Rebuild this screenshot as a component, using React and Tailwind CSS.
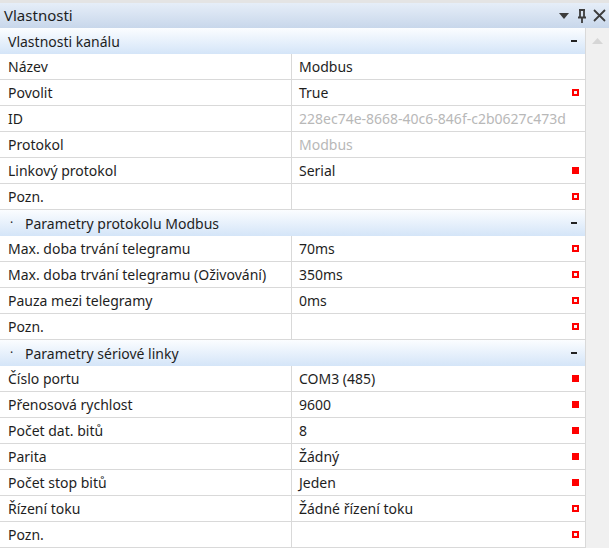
import React from 'react';

const GROUPS = [
  {
    title: 'Vlastnosti kanálu',
    bullet: false,
    rows: [
      { name: 'Název', value: 'Modbus' },
      { name: 'Povolit', value: 'True', mark: 'open' },
      { name: 'ID', value: '228ec74e-8668-40c6-846f-c2b0627c473d', disabled: true },
      { name: 'Protokol', value: 'Modbus', disabled: true },
      { name: 'Linkový protokol', value: 'Serial', mark: 'full' },
      { name: 'Pozn.', value: '', mark: 'open' },
    ],
  },
  {
    title: 'Parametry protokolu Modbus',
    bullet: true,
    rows: [
      { name: 'Max. doba trvání telegramu', value: '70ms', mark: 'open' },
      { name: 'Max. doba trvání telegramu (Oživování)', value: '350ms', mark: 'open' },
      { name: 'Pauza mezi telegramy', value: '0ms', mark: 'open' },
      { name: 'Pozn.', value: '', mark: 'open' },
    ],
  },
  {
    title: 'Parametry sériové linky',
    bullet: true,
    rows: [
      { name: 'Číslo portu', value: 'COM3 (485)', mark: 'full' },
      { name: 'Přenosová rychlost', value: '9600', mark: 'full' },
      { name: 'Počet dat. bitů', value: '8', mark: 'full' },
      { name: 'Parita', value: 'Žádný', mark: 'full' },
      { name: 'Počet stop bitů', value: 'Jeden', mark: 'full' },
      { name: 'Řízení toku', value: 'Žádné řízení toku', mark: 'open' },
      { name: 'Pozn.', value: '', mark: 'open' },
    ],
  },
];

function Mark({ type }) {
  if (type === 'full') return <div className="h-[7px] w-[7px] bg-[#ff0000]" />;
  if (type === 'open') return <div className="h-[7px] w-[7px] border-2 border-[#ff0000] bg-[#f4f4f4]" />;
  return null;
}

function GroupHeader({ title, bullet }) {
  return (
    <div className="flex h-[26px] items-center bg-gradient-to-b from-[#fbfdff] to-[#d4e5f8] pl-[8px] pr-[8px]">
      {bullet && <span className="w-[17px] pl-[2px] text-[12px]">·</span>}
      <span className="flex-1">{title}</span>
      <span className="mb-[1px] h-[2px] w-[6px] bg-[#222]" />
    </div>
  );
}

function Row({ row }) {
  return (
    <div className="flex h-[26px] border-b border-[#d9d9d9] bg-white">
      <div className="flex w-[292px] items-center border-r border-[#d9d9d9] pl-[8px]">{row.name}</div>
      <div className={`flex flex-1 items-center pl-[7px] pr-[6px] ${row.disabled ? 'text-[#b8b8b8]' : ''}`}>
        <span className="flex-1 whitespace-nowrap">{row.value}</span>
        <Mark type={row.mark} />
      </div>
    </div>
  );
}

export default function App() {
  return (
    <div
      className="h-[548px] w-[609px] overflow-hidden bg-white text-[14px] text-[#1e1e1e]"
      style={{ fontFamily: '"Segoe UI", "Noto Sans", sans-serif' }}
    >
      <div className="flex h-[28px] items-center border-t-[3px] border-[#e4e4e4] bg-gradient-to-b from-[#e6eef8] to-[#c8d7eb] pl-[4px] pr-[3px]">
        <span className="flex-1 text-[15px]">Vlastnosti</span>
        <svg width="10" height="6" viewBox="0 0 10 6" className="mr-[8px]">
          <path d="M0 0 H10 L5 6 Z" fill="#3c3c3c" />
        </svg>
        <svg width="10" height="14" viewBox="0 0 10 14" className="mr-[6px]">
          <path d="M2 1 H8 M3 1 V8 M7 1 V8 M1 8.5 H9 M5 8.5 V14" stroke="#3c3c3c" strokeWidth="1.8" fill="none" />
        </svg>
        <svg width="13" height="13" viewBox="0 0 13 13">
          <path d="M1 1 L12 12 M12 1 L1 12" stroke="#3c3c3c" strokeWidth="1.8" />
        </svg>
      </div>
      <div className="flex">
        <div className="w-[586px] border-r border-[#d9d9d9]">
          {GROUPS.map((g) => (
            <div key={g.title}>
              <GroupHeader title={g.title} bullet={g.bullet} />
              {g.rows.map((r, i) => (
                <Row key={i} row={r} />
              ))}
            </div>
          ))}
        </div>
        <div className="flex flex-1 justify-center bg-[#f0f0f0] pt-[10px]">
          <svg width="11" height="6" viewBox="0 0 11 6">
            <path d="M0 6 L5.5 0 L11 6 Z" fill="#d6d6d6" />
          </svg>
        </div>
      </div>
    </div>
  );
}
